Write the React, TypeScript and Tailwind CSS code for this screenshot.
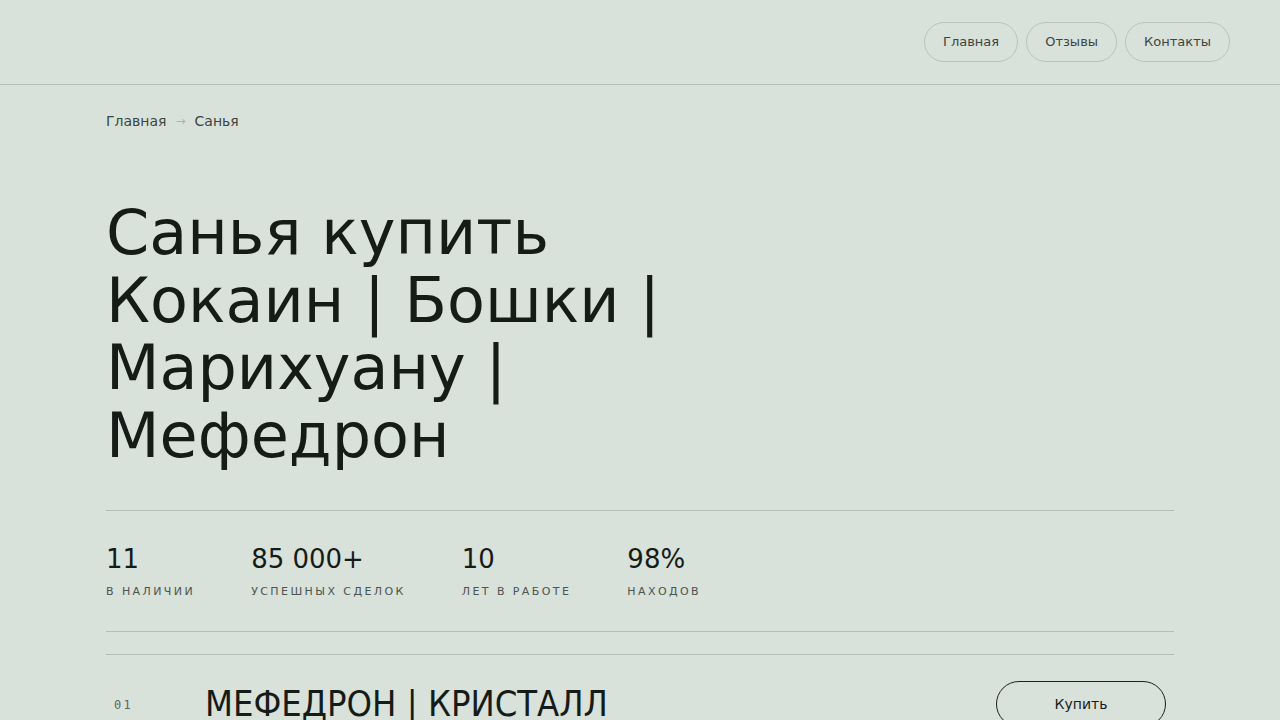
import React from "react";

const stats = [
  { n: "11", l: "В наличии" },
  { n: "85 000+", l: "Успешных сделок" },
  { n: "10", l: "лет в работе" },
  { n: "98%", l: "Находов" },
];

export default function App() {
  return (
    <div
      className="min-h-screen bg-[#d8e1da] text-[#151b17]"
      style={{ fontFamily: '"DejaVu Sans", sans-serif' }}
    >
      <header className="h-[85px] border-b border-[#b5bfb7] flex items-center justify-end pr-[50px]">
        <nav className="flex gap-2">
          {["Главная", "Отзывы", "Контакты"].map((t) => (
            <a
              key={t}
              className="h-10 px-[18px] flex items-center rounded-full border border-[#b9c3bb] text-[13px] text-[#3d4640]"
            >
              {t}
            </a>
          ))}
        </nav>
      </header>
      <main className="px-[106px]">
        <div className="pt-[26px] flex items-center gap-[9px] text-[14px] leading-5 text-[#3d4640]">
          <span>Главная</span>
          <span className="text-[#a9b3ab] text-[12px]">→</span>
          <span>Санья</span>
        </div>
        <h1 className="mt-[68px] text-[62px] leading-[67.5px] font-normal text-[#151b17] max-w-[620px]">
          Санья купить Кокаин | Бошки | Марихуану | Мефедрон
        </h1>
        <div className="mt-[41px] border-t border-b border-[#b5bfb7] pt-[32px] pb-[31px] flex gap-[56px]">
          {stats.map((s) => (
            <div key={s.l} className="flex flex-col gap-[9px]">
              <div className="text-[26px] leading-8 text-[#151b17]">{s.n}</div>
              <div className="text-[11px] leading-4 uppercase tracking-[0.22em] text-[#4b544e]">
                {s.l}
              </div>
            </div>
          ))}
        </div>
        <div className="mt-[22px] border-t border-[#b5bfb7] pt-[26px] flex items-center">
          <div
            className="w-[99px] pl-2 pt-[2px] text-[12px] tracking-[0.2em] text-[#5c655f]"
            style={{ fontFamily: '"DejaVu Sans Mono", monospace' }}
          >
            01
          </div>
          <div
            className="flex-1 text-[36px] leading-[46px] uppercase text-[#151b17]"
            style={{ fontFamily: '"DejaVu Sans Condensed", "DejaVu Sans", sans-serif', fontStretch: "condensed" }}
          >
            Мефедрон | Кристалл
          </div>
          <button className="mr-2 w-[170px] h-[46px] rounded-full border border-[#1a201c] text-[14px] text-[#151b17]">
            Купить
          </button>
        </div>
      </main>
    </div>
  );
}
